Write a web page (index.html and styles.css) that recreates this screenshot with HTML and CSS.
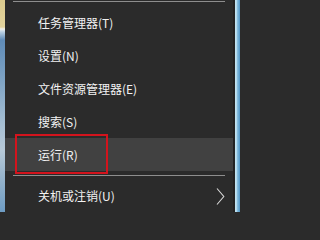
FILE: index.html
```html
<!DOCTYPE html>
<html lang="zh-CN">
<head>
<meta charset="utf-8">
<title>Win+X</title>
<link rel="stylesheet" href="styles.css">
</head>
<body>
<div class="screen">
  <div class="desk-left"></div>
  <div class="menu">
    <div class="sep sep-top"></div>
    <div class="item">任务管理器(T)</div>
    <div class="item">设置(N)</div>
    <div class="item">文件资源管理器(E)</div>
    <div class="item">搜索(S)</div>
    <div class="item hover">运行(R)</div>
    <div class="sep"></div>
    <div class="item sub">
      <span>关机或注销(U)</span>
      <svg class="chev" width="9" height="17" viewBox="0 0 9 17"><polyline points="1,0.5 7.8,8.5 1,16.5" fill="none" stroke="#d8d8d8" stroke-width="1.1"/></svg>
    </div>
  </div>
  <div class="desk-right"></div>
  <div class="mark"></div>
</div>
</body>
</html>
```

FILE: styles.css
```css
html, body {
  margin: 0;
  padding: 0;
  background: #2b2b2b;
}
.screen {
  position: relative;
  width: 240px;
  height: 212px;
  display: flex;
  overflow: hidden;
  font-family: "Noto Sans CJK SC", "Noto Sans", sans-serif;
}
.desk-left {
  width: 5px;
  flex: none;
  background: linear-gradient(180deg, #dccb8e 0px, #e3d49e 27px, #f2f2ee 29px, #b9cfe2 32px, #5f8bb7 40px, #7ea3c4 80px, #a7c0d4 125px, #b8cad8 150px, #9ab6cc 175px, #6e9cc4 212px);
}
.menu {
  width: 228px;
  flex: none;
  background: #2b2b2b;
  border-right: 2px solid #222222;
  display: flex;
  flex-direction: column;
}
.sep {
  height: 1px;
  background: #8e8e8e;
  margin: 4px 8px 3px 8px;
}
.sep-top {
  margin-top: 1px;
  margin-bottom: 5px;
}
.item {
  height: 33px;
  padding-left: 33px;
  padding-right: 8px;
  display: flex;
  align-items: center;
  justify-content: space-between;
  color: #f2f2f2;
  font-size: 12px;
  line-height: 1;
}
.item.hover {
  background: #414141;
}
.chev {
  display: block;
  margin-top: 1px;
}
.desk-right {
  flex: 1;
  background: linear-gradient(90deg, #a9d6ea 0px, #d7eef6 1px, #8ec4e2 2px, #4e94c6 5px);
}
.mark {
  position: absolute;
  left: 15px;
  top: 134px;
  width: 89px;
  height: 36px;
  border: 2px solid #d3141d;
}
```
